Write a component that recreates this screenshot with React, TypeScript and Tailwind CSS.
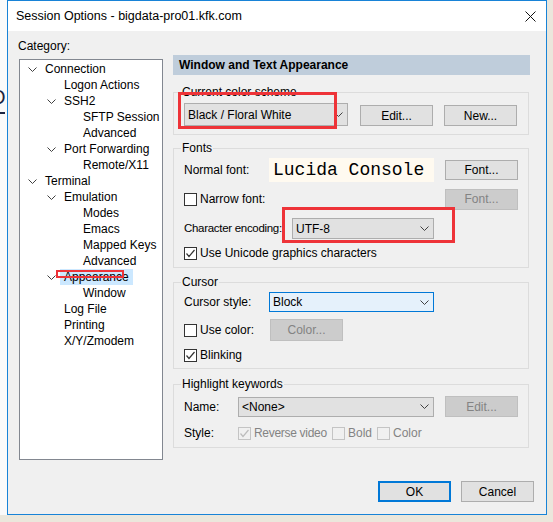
import React from 'react';

type Node = { t: string; l: number; c?: boolean; sel?: boolean };

const tree: Node[] = [
  { t: 'Connection', l: 0, c: true },
  { t: 'Logon Actions', l: 1 },
  { t: 'SSH2', l: 1, c: true },
  { t: 'SFTP Session', l: 2 },
  { t: 'Advanced', l: 2 },
  { t: 'Port Forwarding', l: 1, c: true },
  { t: 'Remote/X11', l: 2 },
  { t: 'Terminal', l: 0, c: true },
  { t: 'Emulation', l: 1, c: true },
  { t: 'Modes', l: 2 },
  { t: 'Emacs', l: 2 },
  { t: 'Mapped Keys', l: 2 },
  { t: 'Advanced', l: 2 },
  { t: 'Appearance', l: 1, c: true, sel: true },
  { t: 'Window', l: 2 },
  { t: 'Log File', l: 1 },
  { t: 'Printing', l: 1 },
  { t: 'X/Y/Zmodem', l: 1 },
];

const indent = ['pl-[8px]', 'pl-[27px]', 'pl-[46px]'];

function Chevron() {
  return (
    <svg width="9" height="5" viewBox="0 0 9 5">
      <path d="M0.5 0.5 L4.5 4.5 L8.5 0.5" fill="none" stroke="#404040" strokeWidth="1" />
    </svg>
  );
}

function Check({ checked, disabled }: { checked?: boolean; disabled?: boolean }) {
  return (
    <span
      className={`flex h-[13px] w-[13px] shrink-0 items-center justify-center border ${
        disabled ? 'border-[#c4c4c4] bg-[#f0f0f0]' : 'border-[#333333] bg-white'
      }`}
    >
      {checked && (
        <svg width="11" height="11" viewBox="0 0 11 11">
          <path
            d="M1.5 5.5 L4 8.5 L9.5 2"
            fill="none"
            stroke={disabled ? '#bcbcbc' : '#333333'}
            strokeWidth="1.2"
          />
        </svg>
      )}
    </span>
  );
}

function Btn({ label, disabled, h = 'h-[21px]' }: { label: string; disabled?: boolean; h?: string }) {
  return (
    <div
      className={`flex w-[73px] shrink-0 items-center justify-center border ${h} ${
        disabled ? 'border-[#bfbfbf] bg-[#cccccc] text-[#838383]' : 'border-[#adadad] bg-[#e1e1e1] text-black'
      }`}
    >
      {label}
    </div>
  );
}

function Combo({ value, w, h, focused }: { value: string; w: string; h: string; focused?: boolean }) {
  return (
    <div
      className={`flex shrink-0 items-center justify-between border pl-[3px] pr-[4px] ${w} ${h} ${
        focused ? 'border-[#0078d7] bg-[#e5f1fb]' : 'border-[#adadad] bg-[#e1e1e1]'
      }`}
    >
      <span>{value}</span>
      <Chevron />
    </div>
  );
}

function Group({ label, h, children }: { label: string; h: string; children: React.ReactNode }) {
  return (
    <div className={`relative w-[356px] border border-[#dcdcdc] pl-[10px] pr-[10px] ${h}`}>
      <span className="absolute -top-[8px] left-[7px] bg-[#f0f0f0] px-[1px] leading-[14px]">{label}</span>
      {children}
    </div>
  );
}

export default function App() {
  return (
    <div className="flex h-[522px] w-[553px] bg-[#ebe7dc] font-['Liberation_Sans',Arial,sans-serif] text-[12px] text-black">
      {/* strip of the window behind */}
      <div className="h-[515px] w-[7px] overflow-hidden bg-[#fafafa] text-[#1b2440]">
        <div className="-ml-[10px] mt-[87px] h-[20px] text-[20px] leading-[20px]">O</div>
        <div className="mt-[5px] h-[2px] w-[5px] bg-[#1b2440]" />
      </div>

      <div className="flex h-[515px] w-[540px] flex-col border border-[#1883d7]">
        {/* title bar */}
        <div className="flex h-[30px] items-center justify-between bg-white pl-[8px] pr-[10px]">
          <span className="text-[12.5px]">Session Options - bigdata-pro01.kfk.com</span>
          <svg width="11" height="11" viewBox="0 0 11 11">
            <path d="M0.5 0.5 L10.5 10.5 M10.5 0.5 L0.5 10.5" stroke="#111" strokeWidth="1" />
          </svg>
        </div>

        <div className="flex flex-1 flex-col bg-[#f0f0f0]">
          <div className="flex">
            {/* category column */}
            <div className="ml-[11px] w-[144px] pt-[8px]">
              <div className="-ml-[1px] h-[15px] leading-[15px]">Category:</div>
              <div className="relative mt-[5px] h-[401px] border border-[#828790] bg-white pt-[1px]">
                {tree.map((n, i) => (
                  <div key={i} className={`flex h-[16px] items-center whitespace-nowrap ${indent[n.l]}`}>
                    <span className="flex w-[17px] shrink-0 items-center">{n.c && <Chevron />}</span>
                    <span
                      className={`leading-[16px] ${n.sel ? '-ml-[4px] bg-[#cce8ff] px-[4px]' : ''}`}
                    >
                      {n.t}
                    </span>
                  </div>
                ))}
                <div className="absolute left-[36px] top-[210px] h-[8px] w-[68px] border-2 border-[#ee3338]" />
              </div>
            </div>

            {/* settings column */}
            <div className="relative ml-[10px] flex flex-col whitespace-nowrap">
              <div className="mt-[24px] flex h-[20px] w-[357px] items-center bg-[#bfcddb] pl-[6px] font-bold">
                Window and Text Appearance
              </div>

              <div className="mt-[17px]">
                <Group label="Current color scheme" h="h-[43px]">
                  <div className="flex items-start pt-[10px]">
                    <Combo value="Black / Floral White" w="w-[164px]" h="h-[23px]" />
                    <div className="ml-[12px] mt-[2px]">
                      <Btn label="Edit..." />
                    </div>
                    <div className="ml-[11px] mt-[2px]">
                      <Btn label="New..." />
                    </div>
                  </div>
                </Group>
              </div>

              <div className="mt-[13px]">
                <Group label="Fonts" h="h-[120px]">
                  <div className="mt-[9px] flex h-[24px] items-center">
                    <span className="w-[85px] shrink-0">Normal font:</span>
                    <div className="flex h-[24px] w-[165px] items-center bg-[#fffaf0] pl-[4px] font-['Liberation_Mono',monospace] text-[18px]">
                      Lucida Console
                    </div>
                    <div className="ml-auto">
                      <Btn label="Font..." h="h-[20px]" />
                    </div>
                  </div>
                  <div className="mt-[6px] flex h-[22px] items-center">
                    <Check />
                    <span className="ml-[3px]">Narrow font:</span>
                    <div className="ml-auto">
                      <Btn label="Font..." disabled />
                    </div>
                  </div>
                  <div className="mt-[8px] flex h-[21px] items-center">
                    <span className="w-[108px] shrink-0 text-[11.5px] tracking-[-0.3px]">Character encoding:</span>
                    <Combo value="UTF-8" w="w-[142px]" h="h-[21px]" />
                  </div>
                  <div className="mt-[6px] flex h-[16px] items-center">
                    <Check checked />
                    <span className="ml-[3px]">Use Unicode graphics characters</span>
                  </div>
                </Group>
              </div>

              <div className="mt-[14px]">
                <Group label="Cursor" h="h-[87px]">
                  <div className="mt-[9px] flex h-[20px] items-center">
                    <span className="w-[85px] shrink-0">Cursor style:</span>
                    <Combo value="Block" w="w-[165px]" h="h-[20px]" focused />
                  </div>
                  <div className="mt-[7px] flex h-[22px] items-center">
                    <div className="flex w-[86px] shrink-0 items-center">
                      <Check />
                      <span className="ml-[3px]">Use color:</span>
                    </div>
                    <Btn label="Color..." disabled h="h-[22px]" />
                  </div>
                  <div className="mt-[6px] flex h-[16px] items-center">
                    <Check checked />
                    <span className="ml-[3px]">Blinking</span>
                  </div>
                </Group>
              </div>

              <div className="mt-[15px]">
                <Group label="Highlight keywords" h="h-[64px]">
                  <div className="mt-[11px] flex h-[21px] items-center">
                    <span className="w-[54px] shrink-0">Name:</span>
                    <Combo value="<None>" w="w-[196px]" h="h-[20px]" />
                    <div className="ml-auto">
                      <Btn label="Edit..." disabled />
                    </div>
                  </div>
                  <div className="mt-[8px] flex h-[16px] items-center">
                    <span className="w-[54px] shrink-0">Style:</span>
                    <div className="flex w-[94px] shrink-0 items-center text-[#838383]">
                      <Check checked disabled />
                      <span className="ml-[3px] tracking-[-0.3px]">Reverse video</span>
                    </div>
                    <div className="flex w-[45px] shrink-0 items-center text-[#838383]">
                      <Check disabled />
                      <span className="ml-[3px]">Bold</span>
                    </div>
                    <div className="flex items-center text-[#838383]">
                      <Check disabled />
                      <span className="ml-[3px]">Color</span>
                    </div>
                  </div>
                </Group>
              </div>

              {/* annotation boxes */}
              <div className="absolute left-[5px] top-[61px] h-[37px] w-[159px] border-[3px] border-[#ee3338]" />
              <div className="absolute left-[109px] top-[176px] h-[36px] w-[173px] border-[3px] border-[#ee3338]" />
            </div>
          </div>

          <div className="mt-[21px] flex justify-end gap-[10px] pr-[12px]">
            <div className="flex h-[21px] w-[73px] items-center justify-center border-2 border-[#0078d7] bg-[#e1e1e1]">
              OK
            </div>
            <Btn label="Cancel" />
          </div>
        </div>
      </div>
    </div>
  );
}
